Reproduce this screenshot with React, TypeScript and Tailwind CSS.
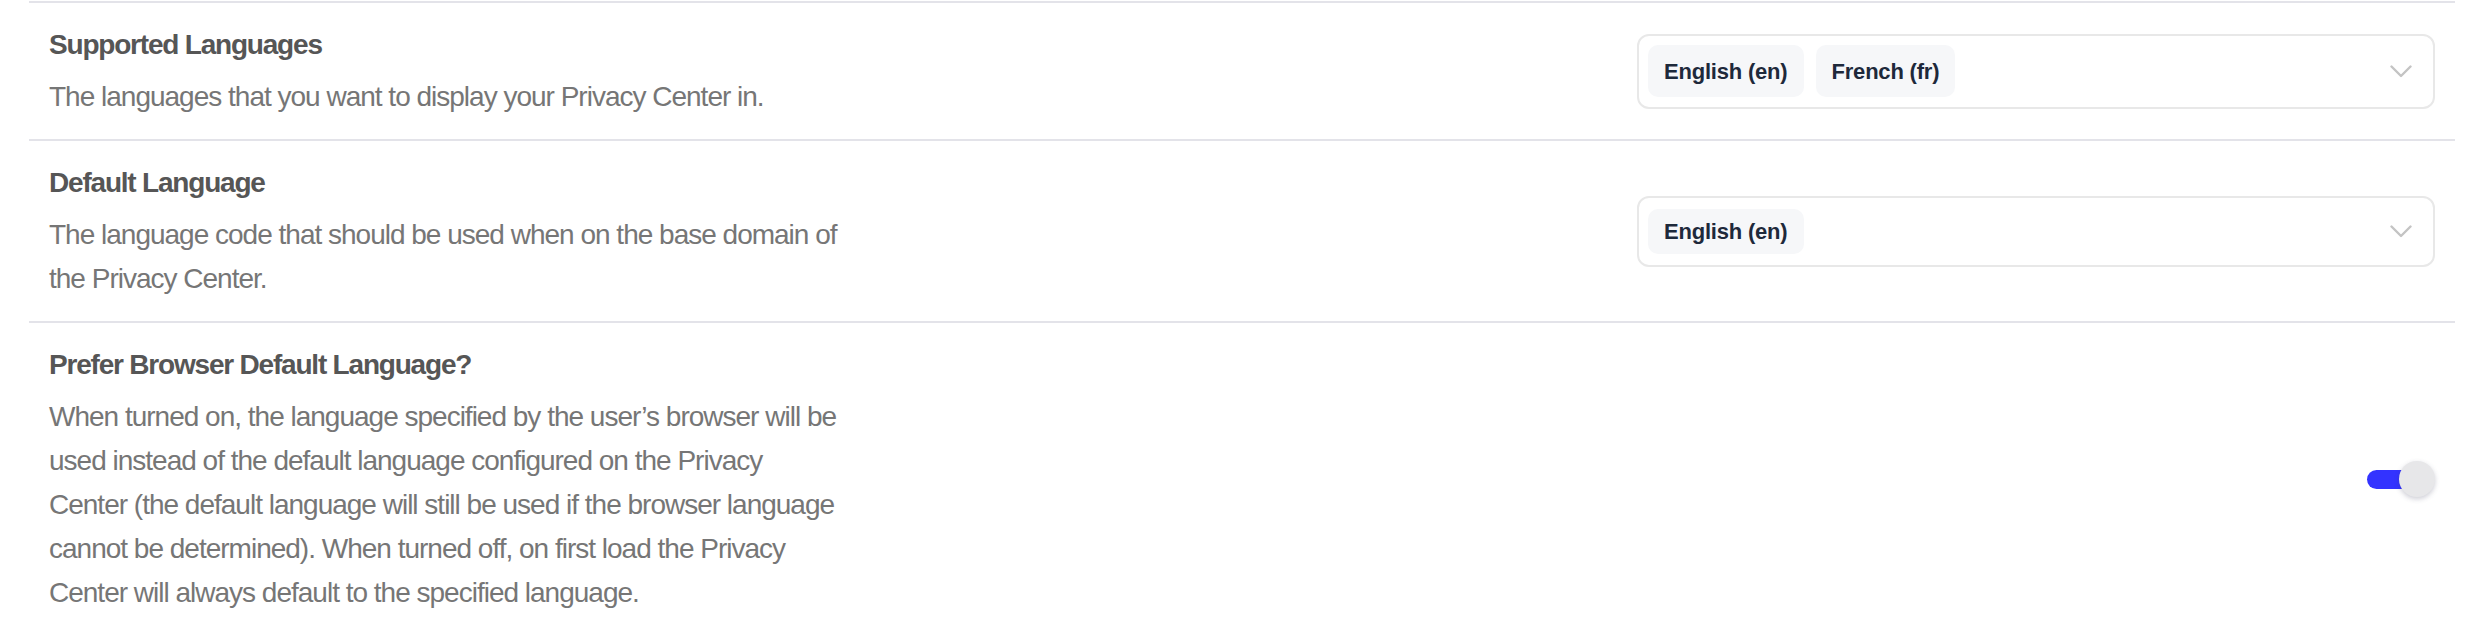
import { useState } from 'react';

type Lang = { code: string; label: string };

const supported: Lang[] = [
  { code: 'en', label: 'English (en)' },
  { code: 'fr', label: 'French (fr)' },
];

function Chevron() {
  return (
    <svg width="22" height="13" viewBox="0 0 22 13" fill="none" className="shrink-0">
      <path d="M1.5 1.5 L11 11 L20.5 1.5" stroke="#c4c4c4" strokeWidth="2.4" strokeLinecap="round" strokeLinejoin="round" />
    </svg>
  );
}

function Chip({ label, tall }: { label: string; tall?: boolean }) {
  return (
    <span
      className={
        tall
          ? 'inline-flex h-[52px] items-center rounded-[10px] bg-[#f6f7f9] px-4 text-[22px] font-bold tracking-[-0.2px] text-[#1e293b]'
          : 'inline-flex h-[45px] items-center rounded-[10px] bg-[#f6f7f9] px-4 text-[22px] font-bold tracking-[-0.2px] text-[#1e293b]'
      }
    >
      {label}
    </span>
  );
}

function Select({ values, multi }: { values: Lang[]; multi?: boolean }) {
  return (
    <div
      className={
        multi
          ? 'flex h-[75px] w-[798px] items-center justify-between rounded-[12px] border-2 border-[#e8e8e8] pl-[9px] pr-[21px]'
          : 'flex h-[71px] w-[798px] items-center justify-between rounded-[12px] border-2 border-[#e8e8e8] pl-[9px] pr-[21px]'
      }
    >
      <div className="flex items-center gap-3">
        {values.map((v) => (
          <Chip key={v.code} label={v.label} tall={multi} />
        ))}
      </div>
      <Chevron />
    </div>
  );
}

function Toggle({ on, onChange }: { on: boolean; onChange: (v: boolean) => void }) {
  return (
    <button
      type="button"
      onClick={() => onChange(!on)}
      className="relative flex h-[36px] w-[68px] items-center"
    >
      <span className={on ? 'h-[19px] w-[60px] rounded-full bg-[#3333ff]' : 'h-[19px] w-[60px] rounded-full bg-[#c9c9d1]'} />
      <span
        className={
          on
            ? 'absolute right-0 top-0 h-[36px] w-[36px] rounded-full bg-[#e7e7e9] shadow-[0_2px_5px_rgba(60,60,90,0.25)]'
            : 'absolute left-0 top-0 h-[36px] w-[36px] rounded-full bg-[#e7e7e9] shadow-[0_2px_5px_rgba(60,60,90,0.25)]'
        }
      />
    </button>
  );
}

function Row({ title, desc, children }: { title: string; desc: string; children: React.ReactNode }) {
  return (
    <div className="flex items-center justify-between border-b-2 border-[#e3e3e9] py-5 pl-5 pr-5">
      <div className="w-[794px]">
        <div className="mb-2 text-[28px] font-bold leading-[44px] tracking-[-1.2px] text-[#565656]">{title}</div>
        <div className="text-[28px] leading-[44px] tracking-[-1px] text-[#767676]">{desc}</div>
      </div>
      {children}
    </div>
  );
}

export default function App() {
  const [preferBrowser, setPreferBrowser] = useState(true);

  return (
    <div className="min-h-screen bg-white pt-px" style={{ fontFamily: '"Liberation Sans", Arial, sans-serif' }}>
      <div className="ml-[29px] mr-[19px] border-t-2 border-[#e3e3e9]">
        <Row title="Supported Languages" desc="The languages that you want to display your Privacy Center in.">
          <Select values={supported} multi />
        </Row>
        <Row
          title="Default Language"
          desc="The language code that should be used when on the base domain of the Privacy Center."
        >
          <Select values={[supported[0]]} />
        </Row>
        <Row
          title="Prefer Browser Default Language?"
          desc="When turned on, the language specified by the user’s browser will be used instead of the default language configured on the Privacy Center (the default language will still be used if the browser language cannot be determined). When turned off, on first load the Privacy Center will always default to the specified language."
        >
          <Toggle on={preferBrowser} onChange={setPreferBrowser} />
        </Row>
      </div>
    </div>
  );
}
